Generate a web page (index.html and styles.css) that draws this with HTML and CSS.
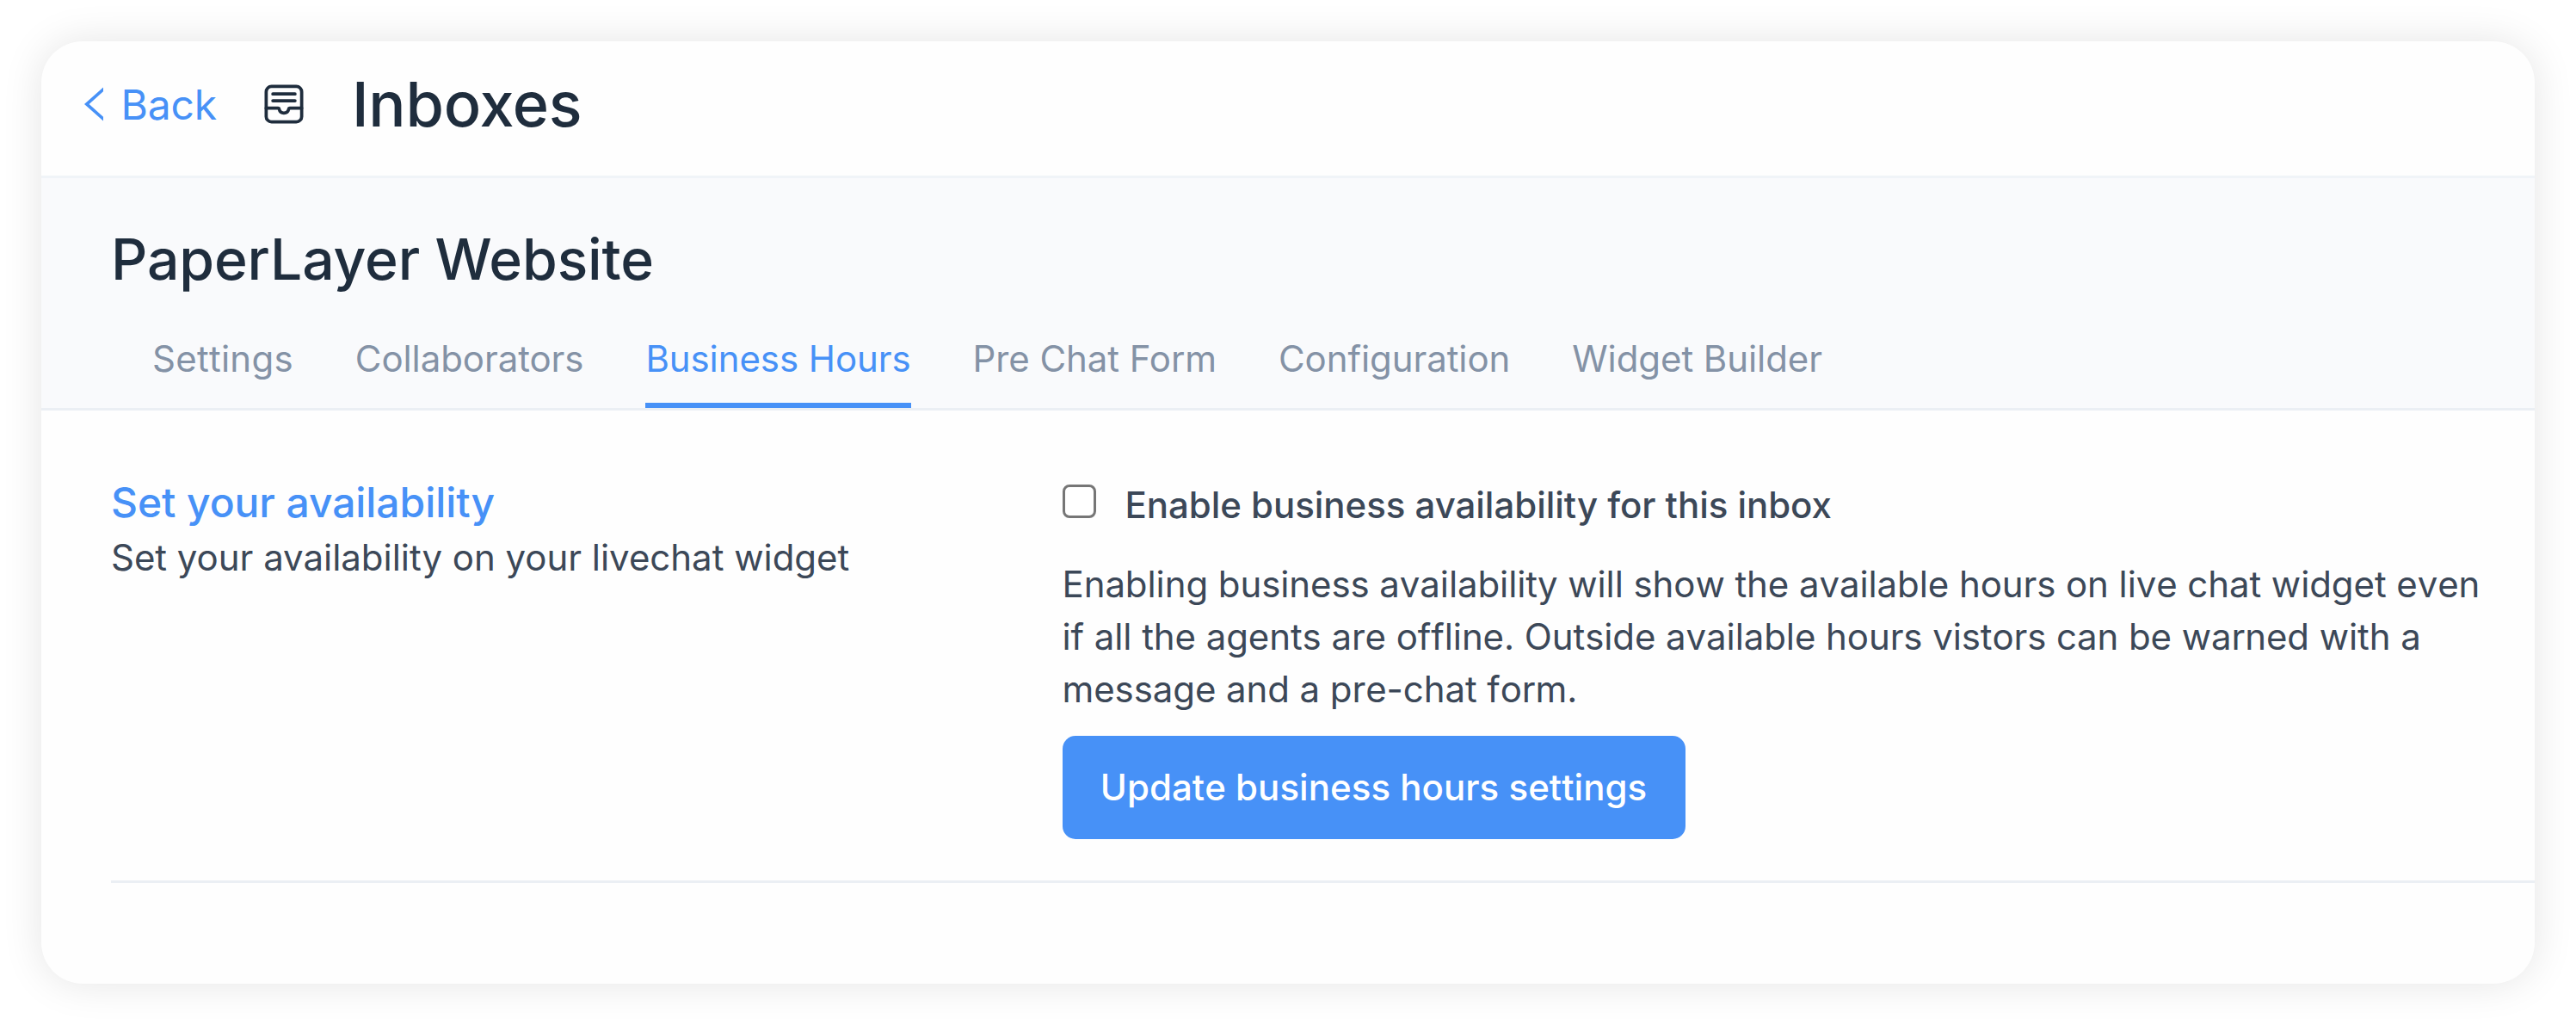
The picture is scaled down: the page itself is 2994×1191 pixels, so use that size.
FILE: index.html
```html
<!DOCTYPE html>
<html lang="en">
<head>
  <meta charset="utf-8">
  <title>Inboxes</title>
  <link rel="stylesheet" href="styles.css">
</head>
<body>
  <main class="card">
    <header class="topbar">
      <a class="back">
        <svg class="back-icon" viewBox="0 0 22 40" fill="none" stroke="currentColor" stroke-width="3.7"><path d="M24 1.1 2.7 20 24 38.9"/></svg>
        <span class="back-label">Back</span>
      </a>
      <svg class="inbox-icon" viewBox="0 0 24 24" fill="none" stroke="currentColor" stroke-width="1.5" stroke-linecap="round">
        <rect x="3.75" y="3.75" width="16.5" height="16.5" rx="2.5"/>
        <path d="M6.85 7.25h10.3M6.85 10.4h10.3"/>
        <path d="M3.75 13.85h5.5c.35 0 .5.2.55.5a2.25 2.25 0 0 0 4.4 0c.05-.3.2-.5.55-.5h5.5"/>
      </svg>
      <h1 class="title">Inboxes</h1>
    </header>

    <section class="inbox-head">
      <h2 class="inbox-name">PaperLayer Website</h2>
      <nav class="tabs">
        <a class="tab tab-settings">Settings</a>
        <a class="tab">Collaborators</a>
        <a class="tab active">Business Hours</a>
        <a class="tab">Pre Chat Form</a>
        <a class="tab">Configuration</a>
        <a class="tab">Widget Builder</a>
      </nav>
    </section>

    <section class="settings">
      <div class="intro">
        <h3 class="intro-title">Set your availability</h3>
        <p class="text">Set your availability on your livechat widget</p>
      </div>
      <form class="form">
        <label class="check">
          <input class="checkbox" type="checkbox">
          <span>Enable business availability for this inbox</span>
        </label>
        <p class="text help">Enabling business availability will show the available hours on live chat widget even if all the agents are offline. Outside available hours vistors can be warned with a message and a pre-chat form.</p>
        <button class="button" type="button">Update business hours settings</button>
      </form>
    </section>
  </main>
</body>
</html>
```

FILE: styles.css
```css
* {
  box-sizing: border-box;
}

body {
  margin: 0;
  padding: 48px;
  height: 1191px;
  background: #fff;
  font-family: Inter, sans-serif;
  font-size: 42px;
  color: #3c4858;
}

h1, h2, h3, p {
  margin: 0;
  font-weight: 500;
}

.card {
  height: 1095px;
  overflow: hidden;
  border-radius: 48px;
  background: #fefefe;
  box-shadow: 0 0 48px rgba(0, 0, 0, 0.105);
}

.topbar {
  display: flex;
  align-items: center;
  height: 159px;
  padding: 0 48px 10px 50px;
  border-bottom: 3px solid #f0f4f8;
  color: #1f2d3d;
}

.back {
  display: flex;
  align-items: center;
  gap: 20.5px;
  width: 202px;
  font-size: 48px;
  line-height: 58px;
  letter-spacing: -0.2px;
  color: #4791f7;
}

.back-label {
  padding-top: 2px;
}

.back-icon {
  width: 22px;
  height: 40px;
}

.inbox-icon {
  width: 60px;
  height: 60px;
}

.title {
  margin-left: 49px;
  font-size: 72px;
  line-height: 86px;
  letter-spacing: -0.25px;
}

.inbox-head {
  height: 270px;
  padding: 54px 81px 0;
  border-bottom: 3px solid #ebeff4;
  background: #f9fafc;
}

.inbox-name {
  margin-bottom: 52px;
  font-size: 66px;
  line-height: 80px;
  letter-spacing: -0.13px;
  color: #1f2d3d;
}

.tabs {
  display: flex;
  gap: 72px;
  padding-left: 48px;
}

.tab {
  padding-bottom: 27px;
  border-bottom: 6px solid transparent;
  line-height: 48px;
  letter-spacing: -0.08px;
  color: #8492a6;
}

.tab-settings {
  font-kerning: none;
  letter-spacing: 0.25px;
}

.active {
  border-bottom-color: #4791f7;
  color: #4791f7;
}

.settings {
  display: grid;
  grid-template-columns: 1105.5px 1663px;
  height: 549px;
  margin-left: 81px;
  padding-top: 76px;
  border-bottom: 3px solid #ebeff4;
}

.intro-title {
  margin-bottom: 3px;
  padding-top: 1px;
  font-size: 48px;
  line-height: 60px;
  letter-spacing: -0.08px;
  color: #4791f7;
}

.text {
  font-weight: 400;
  line-height: 61px;
  letter-spacing: -0.03px;
}

.help {
  font-kerning: none;
  letter-spacing: -0.09px;
}

.form {
  display: flex;
  flex-direction: column;
  align-items: flex-start;
  padding-top: 4px;
}

.check {
  display: flex;
  gap: 34px;
  margin-bottom: 31px;
  line-height: 60px;
  font-weight: 500;
  letter-spacing: -0.04px;
}

.checkbox {
  appearance: none;
  width: 39px;
  height: 39px;
  margin: 6px 0 0;
  border: 3px solid #767676;
  border-radius: 8px;
  background: #fff;
}

.button {
  width: 724px;
  height: 120px;
  margin-top: 24px;
  padding: 0;
  border: 0;
  border-radius: 15px;
  background: #4791f7;
  color: #fff;
  font: 500 42px/60px Inter, sans-serif;
  font-kerning: none;
  letter-spacing: 0.04px;
}
```
